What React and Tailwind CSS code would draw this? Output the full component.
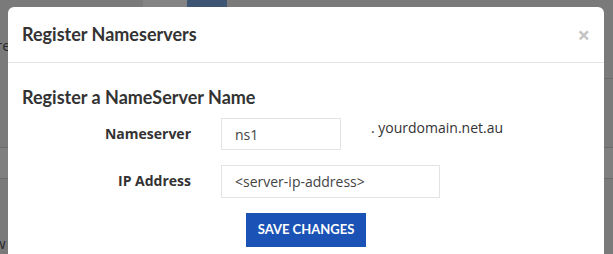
import { useState } from "react";

const lato = "font-['Lato','Open_Sans',sans-serif]";
const open = "font-['Open_Sans','Noto_Sans',sans-serif]";

const Field = ({ label, value, onChange, width, suffix }) => (
  <div className="flex items-start">
    <label className={`${open} w-[169px] shrink-0 text-right text-[14px] font-bold text-[#333] leading-[32px]`}>
      {label}
    </label>
    <input
      type="text"
      value={value}
      onChange={(e) => onChange(e.target.value)}
      className={`${open} ml-[30px] border border-[#e3e3e3] px-[13px] text-[14px] text-[#444] outline-none ${width}`}
    />
    {suffix && (
      <span className={`${open} ml-[30px] text-[14px] leading-[20px] text-[#333]`}>{suffix}</span>
    )}
  </div>
);

const App = () => {
  const [ns, setNs] = useState("ns1");
  const [ip, setIp] = useState("<server-ip-address>");

  return (
    <div className="flex h-[254px] w-[613px] flex-col overflow-hidden bg-[#7a7a7a]">
      {/* page behind the overlay, top strip */}
      <div className="flex h-[7px] shrink-0">
        <div className="w-[143px]" />
        <div className="w-[44px] bg-[#848484]" />
        <div className="w-[40px] bg-[#3e5674]" />
      </div>

      <div className="flex flex-1">
        {/* left strip of page */}
        <div className="flex w-[8px] shrink-0 flex-col overflow-hidden">
          <span className={`${open} -ml-[4px] mt-[28px] whitespace-nowrap text-[15px] leading-[20px] text-[#2a2a2a]`}>re</span>
          <div className="mt-[92px] h-[32px] border-y border-[#6a6a6a] bg-[#7f7f7f]" />
          <span className={`${open} -ml-[6px] mt-[54px] whitespace-nowrap text-[15px] leading-[20px] text-[#2a2a2a]`}>w</span>
        </div>

        {/* modal */}
        <div className="w-[596px] shrink-0 rounded-t-[6px] bg-white pb-[20px]">
          <div className="flex h-[56px] items-center justify-between border-b border-[#e5e5e5] px-[14px]">
            <h4 className={`${lato} text-[18px] font-bold text-[#333]`}>Register Nameservers</h4>
            <button className="mb-[2px] text-[22px] font-bold leading-none text-[#c4c4c4]">×</button>
          </div>

          <div className="px-[14px] pt-[23px]">
            <h3 className={`${lato} text-[18px] font-bold leading-[22px] text-[#333]`}>
              Register a NameServer Name
            </h3>

            <div className="mt-[10px] flex flex-col gap-[15px]">
              <Field label="Nameserver" value={ns} onChange={setNs} width="w-[120px] h-[32px]" suffix=". yourdomain.net.au" />
              <Field label="IP Address" value={ip} onChange={setIp} width="w-[219px] h-[33px]" />
            </div>

            <div className="mt-[15px] pl-[224px]">
              <button className={`${lato} h-[34px] w-[120px] bg-[#1a53b5] text-[13px] font-bold text-white`}>
                SAVE CHANGES
              </button>
            </div>
          </div>
        </div>

        {/* right strip of page */}
        <div className="flex w-[9px] shrink-0 flex-col">
          <div className="mt-[71px] h-px bg-[#6c6c6c]" />
          <div className="mt-[68px] h-[32px] border-y border-[#6a6a6a] bg-[#7f7f7f]" />
        </div>
      </div>
    </div>
  );
};

export default App;
